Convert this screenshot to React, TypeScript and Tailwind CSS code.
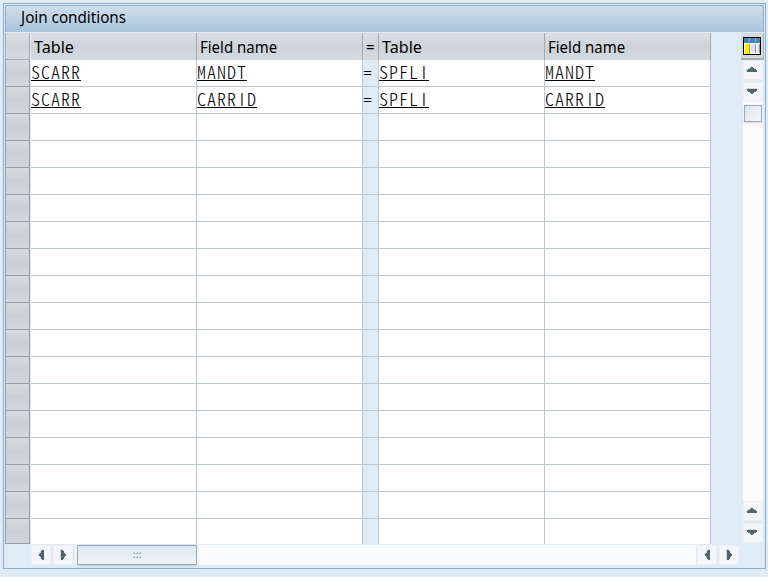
import React from "react";

const joins = [
  ["SCARR", "MANDT", "SPFLI", "MANDT"],
  ["SCARR", "CARRID", "SPFLI", "CARRID"],
];

const columns =
  "grid grid-cols-[26px_166px_166px_16px_166px_166px]";

// Draws every capital I as a plain bar in its half-width slot.
function Value({ text }: { text?: string }) {
  if (!text) return null;
  return (
    <span className="mt-[4px] block h-[17px] w-fit border-b border-black whitespace-nowrap">
      <span className="relative -top-[1px] block text-[18px] leading-[17px] font-light tracking-[1px] text-black [font-feature-settings:'hwid'] [font-family:'Noto_Sans_CJK_KR',monospace]">
        {text.split(/(I)/).map((part, i) =>
          part === "I" ? (
            <span
              key={i}
              className="inline-block w-[10px] text-center leading-[10px] tracking-normal [font-family:Roboto,sans-serif]"
            >
              I
            </span>
          ) : (
            part
          ),
        )}
      </span>
    </span>
  );
}

function Heading({ children }: { children: React.ReactNode }) {
  return (
    <div className="border-r border-b border-r-[#a0acb9] border-b-[#bcc6d2] bg-linear-to-b from-[#dbe0e4] via-[#ced3da] to-[#d5dadf] pl-[3px] pt-[1px] whitespace-nowrap">
      {children}
    </div>
  );
}

function Arrow({ dir }: { dir: "up" | "down" | "left" | "right" }) {
  const paths = {
    up: "M4 12v-2h1V9h2V8h1V7h2v1h1v1h2v1h1v2z",
    down: "M4 7h10v2h-1v1h-2v1h-1v1H8v-1H7v-1H5V9H4z",
    left: "M13 5h-2v1h-1v2H9v1H8v2h1v1h1v2h1v1h2z",
    right: "M8 5h2v1h1v2h1v1h1v2h-1v1h-1v2h-1v1H8z",
  };
  return (
    <div className="flex h-[20px] w-[20px] shrink-0 items-center justify-center border border-[#eceef5] bg-[#f3f6fb]">
      <svg width="20" height="20" viewBox="0 0 20 20" className="shrink-0">
        <path d={paths[dir]} fill="#c5ccd1" transform="translate(-.7 -.7)" />
        <path d={paths[dir]} fill="#51646f" />
      </svg>
    </div>
  );
}

function ColumnsButton() {
  return (
    <div className="flex h-[27px] w-[23px] items-center justify-center border-r border-b-2 border-[#a6afb8] bg-[#d6dadd]">
      <svg width="18" height="18" viewBox="0 0 18 18" shapeRendering="crispEdges">
        <path fill="#000" d="M0 0h18v18H0z" />
        <path fill="#fff" d="M1 1h16v16H1z" />
        <path fill="#4d82b4" d="M1 1h16v4H1z" />
        <path fill="#83b8dc" d="M6 1h1v4H6zM12 1h1v4h-1z" />
        <path fill="#1790c8" d="M1 5h16v1H1z" />
        <path fill="#ffec00" d="M2 7h4v10H2z" />
        <path fill="#bda900" d="M6 7h1v10H6z" />
        <path fill="#dfe3ee" d="M8 7h4v9H8zM14 7h2v9h-2z" />
        <path fill="#8e96a5" d="M12 7h1v9h-1zM16 7h1v9h-1z" />
      </svg>
    </div>
  );
}

export default function App() {
  return (
    <div className="h-[577px] w-[768px] overflow-hidden bg-[#dfebf5] pt-[3px] pl-[3px] text-[16px] leading-[26px] text-black [font-family:'Noto_Sans',sans-serif]">
      <div className="h-[566px] w-[763px] border border-[#8eabc9] pt-px pl-px">
        <div className="h-[27px] w-[759px] border-t border-r border-l border-[#8eabc9] bg-linear-to-b from-[#cfdfeb] to-[#aac3dc] pl-[15px] leading-[23px]">
          <span className="inline-block origin-left scale-x-[0.95]">Join conditions</span>
        </div>
        <div className="flex h-[512px] pt-px">
          <div className="h-[511px] w-[706px]">
            <div className={columns + " h-[27px]"}>
              <div className="mr-px border-r border-b-2 border-l border-[#a0acb9] bg-linear-to-b from-[#dbe0e4] via-[#ced3da] to-[#d5dadf]" />
              {["Table", "Field name", "=", "Table", "Field name"].map((h, i) => (
                <Heading key={i}>
                  <span
                    className={
                      "inline-block origin-left " +
                      (h === "Table" ? "scale-x-[1.01]" : "scale-x-[0.935]")
                    }
                  >
                    {h}
                  </span>
                </Heading>
              ))}
            </div>
            {Array.from({ length: 18 }, (_, r) => {
              const v = joins[r];
              const cell =
                "border-r border-[#bcc6d2] bg-white " + (r === 17 ? "" : "border-b");
              return (
                <div key={r} className={columns + (r === 17 ? " h-[25px]" : " h-[27px]")}>
                  <div className="mr-px border-r border-b border-l border-[#949eab] bg-linear-to-b from-[#d5dadf] via-[#c9cfd7] to-[#d2d7dd]" />
                  <div className={cell}><Value text={v?.[0]} /></div>
                  <div className={cell}><Value text={v?.[1]} /></div>
                  <div
                    className={
                      "border-r border-[#bcc6d2] bg-[#dfebf5] " + (r === 17 ? "" : "border-b")
                    }
                  >
                    {v && <span className="block leading-[26px] font-light">=</span>}
                  </div>
                  <div className={cell}><Value text={v?.[2]} /></div>
                  <div className={cell}><Value text={v?.[3]} /></div>
                </div>
              );
            })}
          </div>
          <div className="ml-[30px] flex w-[23px] flex-col">
            <ColumnsButton />
            <div className="ml-[2px] flex h-[483px] w-[20px] flex-col">
              <Arrow dir="up" />
              <div className="h-[2px] shrink-0" />
              <Arrow dir="down" />
              <div className="flex-1 bg-[#fafbfc] pt-[3px]">
                <div className="mx-px h-[17px] w-[18px] border border-[#9aa9b7] bg-linear-to-br from-[#dce8f1] to-[#f0f4f7] shadow-sm" />
              </div>
              <Arrow dir="up" />
              <div className="h-[2px] shrink-0" />
              <Arrow dir="down" />
            </div>
          </div>
        </div>
        <div className="flex h-[21px] pt-px pl-[26px]">
          <Arrow dir="left" />
          <div className="w-[2px]" />
          <Arrow dir="right" />
          <div className="mr-px ml-[2px] h-[20px] w-[621px] bg-[#fafbfc] pl-[2px]">
            <div className="flex h-[20px] w-[120px] items-center justify-center border border-[#9aa9b7] bg-linear-to-b from-[#dce8f1] to-[#f0f4f7] shadow-sm">
              <svg width="9" height="6" viewBox="0 0 9 6" shapeRendering="crispEdges">
                <path fill="#9fb0bf" d="M1 0h1v2H0V1h1zM4 0h1v2H3V1h1zM7 0h1v2H6V1h1zM1 4h1v2H0V5h1zM4 4h1v2H3V5h1zM7 4h1v2H6V5h1z" />
              </svg>
            </div>
          </div>
          <Arrow dir="left" />
          <div className="w-[2px]" />
          <Arrow dir="right" />
        </div>
      </div>
    </div>
  );
}
